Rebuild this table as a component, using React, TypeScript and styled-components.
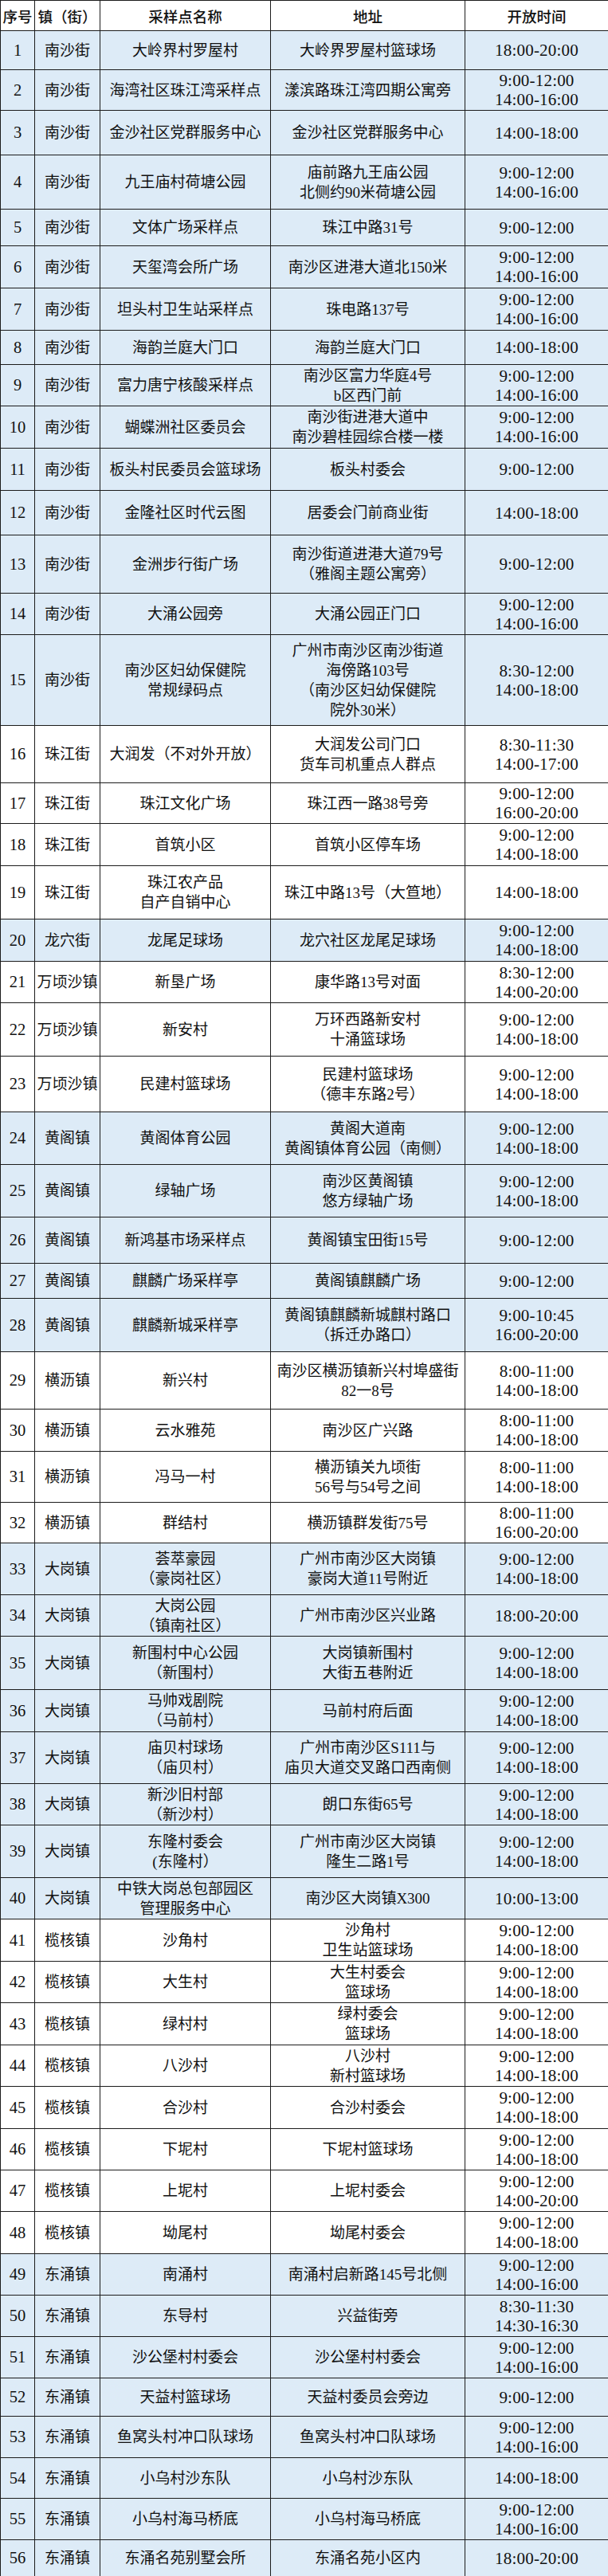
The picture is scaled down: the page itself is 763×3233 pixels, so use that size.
import React from 'react';
import styled, { createGlobalStyle } from 'styled-components';

const GlobalStyle = createGlobalStyle`
  html, body {
    margin: 0;
    padding: 0;
    background: #ffffff;
  }
`;

type Site = {
  no: number;
  town: string;
  name: string[];
  addr: string[];
  time: string[];
  h: number;
};

const AM = '9:00-12:00';

const sites: Site[] = [
  { no: 1, town: '南沙街', name: ['大岭界村罗屋村'], addr: ['大岭界罗屋村篮球场'], time: ['18:00-20:00'], h: 49 },
  { no: 2, town: '南沙街', name: ['海湾社区珠江湾采样点'], addr: ['漾滨路珠江湾四期公寓旁'], time: [AM, '14:00-16:00'], h: 51 },
  { no: 3, town: '南沙街', name: ['金沙社区党群服务中心'], addr: ['金沙社区党群服务中心'], time: ['14:00-18:00'], h: 56 },
  { no: 4, town: '南沙街', name: ['九王庙村荷塘公园'], addr: ['庙前路九王庙公园', '北侧约90米荷塘公园'], time: [AM, '14:00-16:00'], h: 68 },
  { no: 5, town: '南沙街', name: ['文体广场采样点'], addr: ['珠江中路31号'], time: [AM], h: 46 },
  { no: 6, town: '南沙街', name: ['天玺湾会所广场'], addr: ['南沙区进港大道北150米'], time: [AM, '14:00-16:00'], h: 53 },
  { no: 7, town: '南沙街', name: ['坦头村卫生站采样点'], addr: ['珠电路137号'], time: [AM, '14:00-16:00'], h: 53 },
  { no: 8, town: '南沙街', name: ['海韵兰庭大门口'], addr: ['海韵兰庭大门口'], time: ['14:00-18:00'], h: 43 },
  { no: 9, town: '南沙街', name: ['富力唐宁核酸采样点'], addr: ['南沙区富力华庭4号', 'b区西门前'], time: [AM, '14:00-16:00'], h: 52 },
  { no: 10, town: '南沙街', name: ['蝴蝶洲社区委员会'], addr: ['南沙街进港大道中', '南沙碧桂园综合楼一楼'], time: [AM, '14:00-16:00'], h: 53 },
  { no: 11, town: '南沙街', name: ['板头村民委员会篮球场'], addr: ['板头村委会'], time: [AM], h: 53 },
  { no: 12, town: '南沙街', name: ['金隆社区时代云图'], addr: ['居委会门前商业街'], time: ['14:00-18:00'], h: 56 },
  { no: 13, town: '南沙街', name: ['金洲步行街广场'], addr: ['南沙街道进港大道79号', '（雅阁主题公寓旁）'], time: [AM], h: 73 },
  { no: 14, town: '南沙街', name: ['大涌公园旁'], addr: ['大涌公园正门口'], time: [AM, '14:00-16:00'], h: 52 },
  {
    no: 15,
    town: '南沙街',
    name: ['南沙区妇幼保健院', '常规绿码点'],
    addr: ['广州市南沙区南沙街道', '海傍路103号', '（南沙区妇幼保健院', '院外30米）'],
    time: ['8:30-12:00', '14:00-18:00'],
    h: 114,
  },
  { no: 16, town: '珠江街', name: ['大润发（不对外开放）'], addr: ['大润发公司门口', '货车司机重点人群点'], time: ['8:30-11:30', '14:00-17:00'], h: 72 },
  { no: 17, town: '珠江街', name: ['珠江文化广场'], addr: ['珠江西一路38号旁'], time: [AM, '16:00-20:00'], h: 51 },
  { no: 18, town: '珠江街', name: ['首筑小区'], addr: ['首筑小区停车场'], time: [AM, '14:00-18:00'], h: 53 },
  { no: 19, town: '珠江街', name: ['珠江农产品', '自产自销中心'], addr: ['珠江中路13号（大笪地）'], time: ['14:00-18:00'], h: 67 },
  { no: 20, town: '龙穴街', name: ['龙尾足球场'], addr: ['龙穴社区龙尾足球场'], time: [AM, '14:00-18:00'], h: 53 },
  { no: 21, town: '万顷沙镇', name: ['新垦广场'], addr: ['康华路13号对面'], time: ['8:30-12:00', '14:00-20:00'], h: 52 },
  { no: 22, town: '万顷沙镇', name: ['新安村'], addr: ['万环西路新安村', '十涌篮球场'], time: [AM, '14:00-18:00'], h: 67 },
  { no: 23, town: '万顷沙镇', name: ['民建村篮球场'], addr: ['民建村篮球场', '（德丰东路2号）'], time: [AM, '14:00-18:00'], h: 70 },
  { no: 24, town: '黄阁镇', name: ['黄阁体育公园'], addr: ['黄阁大道南', '黄阁镇体育公园（南侧）'], time: [AM, '14:00-18:00'], h: 66 },
  { no: 25, town: '黄阁镇', name: ['绿轴广场'], addr: ['南沙区黄阁镇', '悠方绿轴广场'], time: [AM, '14:00-18:00'], h: 66 },
  { no: 26, town: '黄阁镇', name: ['新鸿基市场采样点'], addr: ['黄阁镇宝田街15号'], time: [AM], h: 58 },
  { no: 27, town: '黄阁镇', name: ['麒麟广场采样亭'], addr: ['黄阁镇麒麟广场'], time: [AM], h: 44 },
  { no: 28, town: '黄阁镇', name: ['麒麟新城采样亭'], addr: ['黄阁镇麒麟新城麒村路口', '（拆迁办路口）'], time: ['9:00-10:45', '16:00-20:00'], h: 67 },
  { no: 29, town: '横沥镇', name: ['新兴村'], addr: ['南沙区横沥镇新兴村埠盛街', '82一8号'], time: ['8:00-11:00', '14:00-18:00'], h: 72 },
  { no: 30, town: '横沥镇', name: ['云水雅苑'], addr: ['南沙区广兴路'], time: ['8:00-11:00', '14:00-18:00'], h: 53 },
  { no: 31, town: '横沥镇', name: ['冯马一村'], addr: ['横沥镇关九顷街', '56号与54号之间'], time: ['8:00-11:00', '14:00-18:00'], h: 64 },
  { no: 32, town: '横沥镇', name: ['群结村'], addr: ['横沥镇群发街75号'], time: ['8:00-11:00', '16:00-20:00'], h: 51 },
  { no: 33, town: '大岗镇', name: ['荟萃豪园', '（豪岗社区）'], addr: ['广州市南沙区大岗镇', '豪岗大道11号附近'], time: [AM, '14:00-18:00'], h: 65 },
  { no: 34, town: '大岗镇', name: ['大岗公园', '（镇南社区）'], addr: ['广州市南沙区兴业路'], time: ['18:00-20:00'], h: 52 },
  { no: 35, town: '大岗镇', name: ['新围村中心公园', '（新围村）'], addr: ['大岗镇新围村', '大街五巷附近'], time: [AM, '14:00-18:00'], h: 67 },
  { no: 36, town: '大岗镇', name: ['马帅戏剧院', '（马前村）'], addr: ['马前村府后面'], time: [AM, '14:00-18:00'], h: 53 },
  { no: 37, town: '大岗镇', name: ['庙贝村球场', '（庙贝村）'], addr: ['广州市南沙区S111与', '庙贝大道交叉路口西南侧'], time: [AM, '14:00-18:00'], h: 65 },
  { no: 38, town: '大岗镇', name: ['新沙旧村部', '（新沙村）'], addr: ['朗口东街65号'], time: [AM, '14:00-18:00'], h: 52 },
  { no: 39, town: '大岗镇', name: ['东隆村委会', '(东隆村）'], addr: ['广州市南沙区大岗镇', '隆生二路1号'], time: [AM, '14:00-18:00'], h: 66 },
  { no: 40, town: '大岗镇', name: ['中铁大岗总包部园区', '管理服务中心'], addr: ['南沙区大岗镇X300'], time: ['10:00-13:00'], h: 52 },
  { no: 41, town: '榄核镇', name: ['沙角村'], addr: ['沙角村', '卫生站篮球场'], time: [AM, '14:00-18:00'], h: 53 },
  { no: 42, town: '榄核镇', name: ['大生村'], addr: ['大生村委会', '篮球场'], time: [AM, '14:00-18:00'], h: 52 },
  { no: 43, town: '榄核镇', name: ['绿村村'], addr: ['绿村委会', '篮球场'], time: [AM, '14:00-18:00'], h: 53 },
  { no: 44, town: '榄核镇', name: ['八沙村'], addr: ['八沙村', '新村篮球场'], time: [AM, '14:00-18:00'], h: 52 },
  { no: 45, town: '榄核镇', name: ['合沙村'], addr: ['合沙村委会'], time: [AM, '14:00-18:00'], h: 53 },
  { no: 46, town: '榄核镇', name: ['下坭村'], addr: ['下坭村篮球场'], time: [AM, '14:00-18:00'], h: 52 },
  { no: 47, town: '榄核镇', name: ['上坭村'], addr: ['上坭村委会'], time: [AM, '14:00-20:00'], h: 52 },
  { no: 48, town: '榄核镇', name: ['坳尾村'], addr: ['坳尾村委会'], time: [AM, '14:00-18:00'], h: 53 },
  { no: 49, town: '东涌镇', name: ['南涌村'], addr: ['南涌村启新路145号北侧'], time: [AM, '14:00-16:00'], h: 52 },
  { no: 50, town: '东涌镇', name: ['东导村'], addr: ['兴益街旁'], time: ['8:30-11:30', '14:30-16:30'], h: 52 },
  { no: 51, town: '东涌镇', name: ['沙公堡村村委会'], addr: ['沙公堡村村委会'], time: [AM, '14:00-16:00'], h: 52 },
  { no: 52, town: '东涌镇', name: ['天益村篮球场'], addr: ['天益村委员会旁边'], time: [AM], h: 48 },
  { no: 53, town: '东涌镇', name: ['鱼窝头村冲口队球场'], addr: ['鱼窝头村冲口队球场'], time: [AM, '14:00-16:00'], h: 52 },
  { no: 54, town: '东涌镇', name: ['小乌村沙东队'], addr: ['小乌村沙东队'], time: ['14:00-18:00'], h: 51 },
  { no: 55, town: '东涌镇', name: ['小乌村海马桥底'], addr: ['小乌村海马桥底'], time: [AM, '14:00-16:00'], h: 52 },
  { no: 56, town: '东涌镇', name: ['东涌名苑别墅会所'], addr: ['东涌名苑小区内'], time: ['18:00-20:00'], h: 46 },
];

// towns shaded light blue in the sheet
const shaded = new Set(['南沙街', '龙穴街', '黄阁镇', '大岗镇', '东涌镇']);

const Sheet = styled.table`
  width: 763px;
  border-collapse: collapse;
  table-layout: fixed;
  color: #111;
  font-family: 'Liberation Serif', 'Noto Sans CJK SC', serif;
`;

const Col = styled.col<{ $w: number }>`
  width: ${p => p.$w}px;
`;

const HeadRow = styled.tr`
  height: 38px;
  background: #ffffff;
`;

const HeadCell = styled.th`
  border: 1.5px solid #1c1c1c;
  padding: 0;
  font-family: 'Noto Sans CJK SC', sans-serif;
  font-weight: 500;
  font-size: 18.5px;
  white-space: nowrap;
  text-align: center;
  vertical-align: middle;
`;

const Row = styled.tr<{ $h: number; $shaded: boolean }>`
  height: ${p => p.$h}px;
  background: ${p => (p.$shaded ? '#ddebf7' : '#ffffff')};
`;

const Cell = styled.td`
  border: 1.5px solid #1c1c1c;
  padding: 0;
  text-align: center;
  vertical-align: middle;
  white-space: nowrap;
  font-size: 19px;
  line-height: 25px;
  font-family: 'Liberation Serif', 'Noto Sans CJK SC', serif;
`;

const NumCell = styled(Cell)`
  font-size: 20.5px;
`;

const TimeCell = styled(Cell)`
  font-size: 21px;
  line-height: 24px;
  letter-spacing: 0.2px;
`;

const Line = styled.div`
  display: block;
`;

const Lines: React.FC<{ items: string[] }> = ({ items }) => (
  <>
    {items.map((t, i) => (
      <Line key={i}>{t}</Line>
    ))}
  </>
);

export default function App() {
  return (
    <>
      <GlobalStyle />
      <Sheet>
        <colgroup>
          <Col $w={43} />
          <Col $w={82} />
          <Col $w={214} />
          <Col $w={244} />
          <Col $w={180} />
        </colgroup>
        <thead>
          <HeadRow>
            <HeadCell>序号</HeadCell>
            <HeadCell>镇（街）</HeadCell>
            <HeadCell>采样点名称</HeadCell>
            <HeadCell>地址</HeadCell>
            <HeadCell>开放时间</HeadCell>
          </HeadRow>
        </thead>
        <tbody>
          {sites.map(s => (
            <Row key={s.no} $h={s.h} $shaded={shaded.has(s.town)}>
              <NumCell>{s.no}</NumCell>
              <Cell>{s.town}</Cell>
              <Cell>
                <Lines items={s.name} />
              </Cell>
              <Cell>
                <Lines items={s.addr} />
              </Cell>
              <TimeCell>
                <Lines items={s.time} />
              </TimeCell>
            </Row>
          ))}
        </tbody>
      </Sheet>
    </>
  );
}
